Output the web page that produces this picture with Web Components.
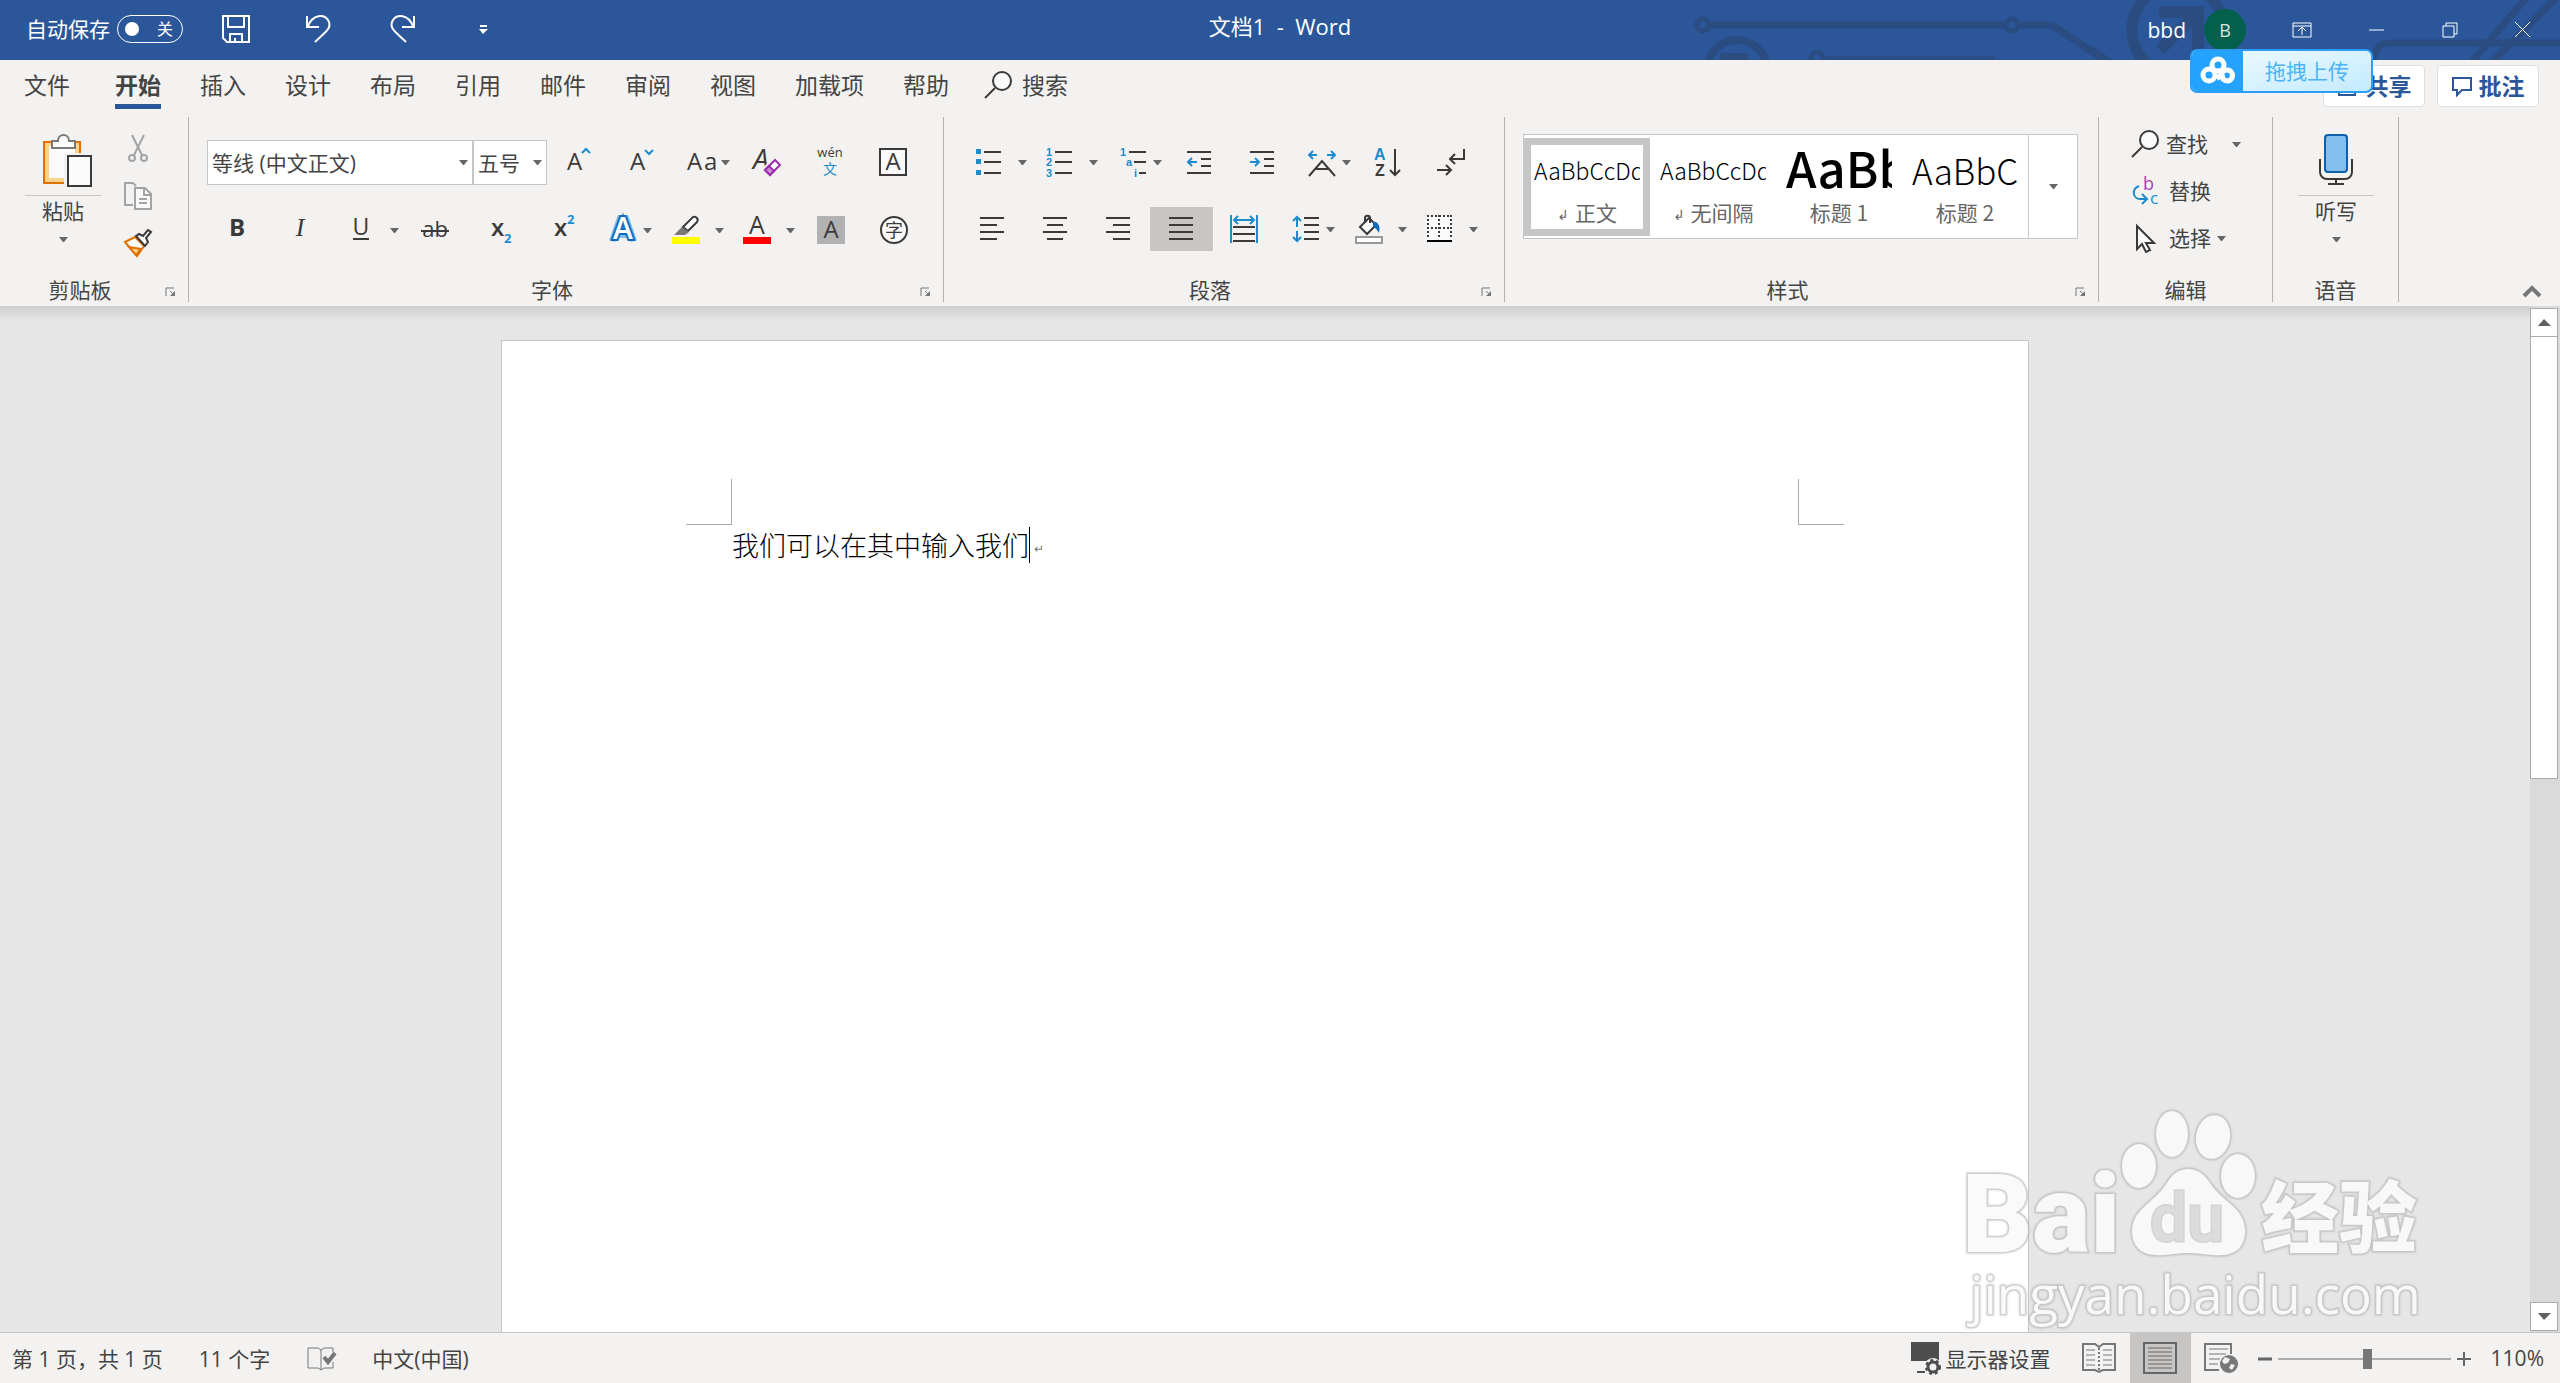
<!DOCTYPE html>
<html lang="zh-CN">
<head>
<meta charset="utf-8">
<title>文档1 - Word</title>
<style>
  html, body {
    height: 100%;
    margin: 0;
  }
  body {
    --brand: #2b579a;
    --surface: #f3f2f1;
    --line: #c6c6c6;
    --ink: #444;
    display: flex;
    flex-direction: column;
    overflow: hidden;
    background: var(--surface);
    color: var(--ink);
    font: 21px/24px "Open Sans", "Noto Sans CJK SC", sans-serif;
  }
  ribbon-bar ribbon-group:nth-of-type(1) { --group-width: 188px; --group-pad: 25px; }
  ribbon-bar ribbon-group:nth-of-type(2) { --group-width: 754px; --group-pad: 18px; }
  ribbon-bar ribbon-group:nth-of-type(3) { --group-width: 560px; --group-pad: 17px; }
  ribbon-bar ribbon-group:nth-of-type(4) { --group-width: 593px; --group-pad: 18px; }
  ribbon-bar ribbon-group:nth-of-type(5) { --group-width: 173px; --group-pad: 32px; }
  ribbon-bar ribbon-group:nth-of-type(6) { --group-width: 125px; --group-pad: 25px; }
</style>
</head>
<body>
<word-titlebar></word-titlebar>
<ribbon-tabs active="开始"></ribbon-tabs>

<ribbon-bar>
  <ribbon-group label="剪贴板" launcher>
    <ribbon-row gap="23">
      <ribbon-big icon="paste" label="粘贴"></ribbon-big>
      <ribbon-stack top="10">
        <ribbon-button icon="cut" title="剪切" slim></ribbon-button>
        <ribbon-button icon="copy" title="复制" slim></ribbon-button>
        <ribbon-button icon="brush" title="格式刷" slim></ribbon-button>
      </ribbon-stack>
    </ribbon-row>
  </ribbon-group>

  <ribbon-group label="字体" launcher>
    <ribbon-row>
      <ribbon-select name="字体" value="等线 (中文正文)" width="266"></ribbon-select>
      <ribbon-select name="字号" value="五号" width="74"></ribbon-select>
      <ribbon-button icon="grow" title="增大字号"></ribbon-button>
      <ribbon-button icon="shrink" title="减小字号"></ribbon-button>
      <ribbon-button icon="case" title="更改大小写" drop></ribbon-button>
      <ribbon-button icon="clear" title="清除格式"></ribbon-button>
      <ribbon-button icon="pinyin" title="拼音指南"></ribbon-button>
      <ribbon-button icon="charBorder" title="字符边框"></ribbon-button>
    </ribbon-row>
    <ribbon-row gap="2">
      <ribbon-row>
        <ribbon-button icon="bold" title="加粗"></ribbon-button>
        <ribbon-button icon="italic" title="倾斜"></ribbon-button>
        <ribbon-button icon="underline" title="下划线" drop split></ribbon-button>
        <ribbon-button icon="strike" title="删除线"></ribbon-button>
      </ribbon-row>
      <ribbon-row>
        <ribbon-button icon="sub" title="下标"></ribbon-button>
        <ribbon-button icon="sup" title="上标"></ribbon-button>
        <ribbon-button icon="effect" title="文本效果" drop></ribbon-button>
        <ribbon-button icon="highlight" title="突出显示" drop split></ribbon-button>
        <ribbon-button icon="color" title="字体颜色" drop split></ribbon-button>
        <ribbon-button icon="shade" title="字符底纹"></ribbon-button>
        <ribbon-button icon="enclose" title="带圈字符"></ribbon-button>
      </ribbon-row>
    </ribbon-row>
  </ribbon-group>

  <ribbon-group label="段落" launcher>
    <ribbon-row gap="2">
      <ribbon-row>
        <ribbon-button icon="bullets" title="项目符号" drop split></ribbon-button>
        <ribbon-button icon="numbers" title="编号" drop split></ribbon-button>
      </ribbon-row>
      <ribbon-row>
        <ribbon-button icon="levels" title="多级列表" drop></ribbon-button>
        <ribbon-button icon="outdent" title="减少缩进量"></ribbon-button>
        <ribbon-button icon="indent" title="增加缩进量"></ribbon-button>
        <ribbon-button icon="asian" title="中文版式" drop></ribbon-button>
        <ribbon-button icon="sort" title="排序"></ribbon-button>
        <ribbon-button icon="marks" title="显示编辑标记"></ribbon-button>
      </ribbon-row>
    </ribbon-row>
    <ribbon-row gap="2">
      <ribbon-row>
        <ribbon-button icon="left" title="左对齐"></ribbon-button>
        <ribbon-button icon="center" title="居中"></ribbon-button>
        <ribbon-button icon="right" title="右对齐"></ribbon-button>
        <ribbon-button icon="justify" title="两端对齐" active></ribbon-button>
        <ribbon-button icon="distribute" title="分散对齐"></ribbon-button>
      </ribbon-row>
      <ribbon-row>
        <ribbon-button icon="spacing" title="行距" drop></ribbon-button>
        <ribbon-button icon="fill" title="底纹" drop split></ribbon-button>
        <ribbon-button icon="borders" title="边框" drop split></ribbon-button>
      </ribbon-row>
    </ribbon-row>
  </ribbon-group>

  <ribbon-group label="样式" launcher>
    <style-gallery>
      <style-card name="正文" mark active>AaBbCcDd</style-card>
      <style-card name="无间隔" mark>AaBbCcDd</style-card>
      <style-card name="标题 1" level="1">AaBb</style-card>
      <style-card name="标题 2" level="2">AaBbC</style-card>
    </style-gallery>
  </ribbon-group>

  <ribbon-group label="编辑">
    <ribbon-stack top="5">
      <ribbon-button icon="find" label="查找" gap="7" far drop></ribbon-button>
      <ribbon-button icon="replace" label="替换" gap="10"></ribbon-button>
      <ribbon-button icon="select" label="选择" gap="10" drop></ribbon-button>
    </ribbon-stack>
  </ribbon-group>

  <ribbon-group label="语音">
    <ribbon-big icon="mic" label="听写"></ribbon-big>
  </ribbon-group>
</ribbon-bar>

<document-view>我们可以在其中输入我们</document-view>
<status-bar></status-bar>
<upload-badge>拖拽上传</upload-badge>

<script>
const dark = '#3b3a39'
const blue = '#1e8bcd'

const svg = (w, h, body) =>
  `<svg width="${w}" height="${h}" viewBox="0 0 ${w} ${h}" fill="none" stroke="${dark}" stroke-width="2" aria-hidden="true">${body}</svg>`

const letter = (x, y, size, text, extra = '') =>
  `<text x="${x}" y="${y}" font-size="${size}" fill="${dark}" stroke="none" ${extra}>${text}</text>`

// Marcas pequeñas de las listas, en azul
const marker = (x, y, text) =>
  letter(x, y, 11, text, `font-family="Liberation Sans" font-weight="700" style="fill:${blue}"`)

// Líneas horizontales: [x1, x2, y]
const lines = (...rows) =>
  rows.map(([a, b, y]) => `<path d="M${a} ${y}H${b}"/>`).join('')

const icons = {
  paste: svg(76, 54, `<path d="M22 10h30v36H22z" fill="#fafafa" stroke="#f7d48a" stroke-width="4"/>
    <path d="M19 8h36v41H19z" stroke="#e07000"/>
    <path d="M27 14V7h6c0-8 11-8 11 0h6v7z" fill="#fafafa" stroke="#7a7a7a"/>
    <path d="M39 19h28v35H39z" fill="#f3f2f1" stroke="none"/>
    <path d="M43 22h23v30H43z" fill="#fafafa"/>`),
  cut: svg(28, 28, `<g stroke="#a3a3a3"><path d="M8 0l10 20M20 0L10 20"/><circle cx="8" cy="23" r="3"/><circle cx="20" cy="23" r="3"/></g>`),
  copy: svg(28, 28, `<g stroke="#a3a3a3"><path d="M9 23H1V1h8l3 3"/><path d="M11 6h10l6 6v15H11z" fill="#fafafa"/><path d="M20 6v7h7M15 17h8M15 21h8"/></g>`),
  brush: svg(28, 28, `<path d="M1 13l10-5 9 9-7 10z" fill="#fff" stroke="#e07000"/><path d="M5 18l12 2-5 6z" fill="#f7d48a" stroke="#e07000"/>
    <path d="M12 7l3-2 4 2 5-6 3 2-5 6 2 4-3 4z" fill="#fff"/>`),
  grow: svg(28, 28, letter(3, 22, 24, 'A') + `<path d="M18 5l4-4 4 4" stroke="${blue}"/>`),
  shrink: svg(28, 28, letter(3, 22, 24, 'A') + `<path d="M18 2l4 4 4-4" stroke="${blue}"/>`),
  case: svg(28, 28, letter(0, 22, 24, 'A') + letter(17, 22, 24, 'a')),
  clear: svg(28, 28, letter(0, 21, 28, 'A', 'font-style="italic"') +
    `<path d="M10 21L21 10l7 7-10 11z" fill="#f3f2f1" stroke="#f3f2f1"/><path d="M12 22l10-10 5 5-10 10z" fill="#fff" stroke="#9b2fae"/><path d="M12 22l4-4 5 5-4 4z" fill="#d18ad9" stroke="#9b2fae"/>`),
  pinyin: svg(28, 28, letter(14, 9, 13, 'wén', 'text-anchor="middle"') +
    letter(14, 26, 14, '文', 'text-anchor="middle" style="fill:#1e8bcd"')),
  charBorder: svg(28, 28, `<path d="M1 1h26v26H1z" fill="#fafafa"/>` + letter(14, 22, 24, 'A', 'text-anchor="middle"')),
  bold: svg(28, 28, letter(13, 20, 24, 'B', 'text-anchor="middle" font-weight="700"')),
  italic: svg(28, 28, letter(13, 20, 26, 'I', 'text-anchor="middle" font-style="italic" font-family="Liberation Serif, serif"')),
  underline: svg(28, 28, letter(14, 19, 23, 'U', 'text-anchor="middle"') + `<path d="M6 23h16"/>`),
  strike: svg(28, 28, letter(14, 21, 22, 'ab', 'text-anchor="middle"') + `<path d="M0 15h28"/>`),
  sub: svg(28, 28, letter(5, 20, 24, 'x', 'font-weight="600"') + letter(18, 27, 13, '2', 'font-weight="700" style="fill:#1e8bcd"')),
  sup: svg(28, 28, letter(5, 20, 24, 'x', 'font-weight="600"') + letter(18, 8, 13, '2', 'font-weight="700" style="fill:#1e8bcd"')),
  effect: svg(28, 28, `<path d="M3 25L11 2h6l8 23M7 19h14" stroke="#83beec" stroke-width="6"/>
    <text x="14" y="23" font-size="30" font-weight="600" text-anchor="middle" fill="#fff" stroke="#0f6cbd" stroke-width="4" paint-order="stroke">A</text>`),
  highlight: svg(28, 28, `<path d="M11 11L21 1c3-1 6 2 4 5L16 15z" fill="#fff"/><path d="M10 11l7 5-4 3H2z" fill="#797775" stroke="none"/><path d="M0 21h28v7H0z" fill="#ff0" stroke="none"/>`),
  color: svg(28, 28, letter(14, 18, 25, 'A', 'text-anchor="middle"') + `<path d="M0 21h28v7H0z" fill="#f00" stroke="none"/>`),
  shade: svg(28, 28, `<path d="M0 0h28v28H0z" fill="#b1b1b1" stroke="none"/>` + letter(14, 22, 24, 'A', 'text-anchor="middle"')),
  enclose: svg(28, 28, `<circle cx="14" cy="14" r="13" fill="#fafafa"/>` + letter(14, 21, 18, '字', 'text-anchor="middle"')),
  bullets: svg(28, 28, `<g fill="${blue}" stroke="none"><path d="M1 1h5v5H1zM1 11h5v5H1zM1 22h5v5H1z"/></g>` + lines([9, 26, 4], [9, 26, 14], [9, 26, 25])),
  numbers: svg(28, 28, marker(0, 8, '1') + marker(0, 18, '2') + marker(0, 29, '3') + lines([9, 26, 4], [9, 26, 14], [9, 26, 25])),
  levels: svg(28, 28, marker(1, 8, '1') + marker(7, 18, 'a') + marker(15, 29, 'i') + lines([10, 27, 4], [15, 27, 14], [20, 27, 25])),
  outdent: svg(28, 28, lines([2, 26, 4], [16, 26, 11], [16, 26, 18], [2, 26, 25]) + `<path d="M12 14H3M7 10l-4 4 4 4" stroke="${blue}"/>`),
  indent: svg(28, 28, lines([2, 26, 4], [16, 26, 11], [16, 26, 18], [2, 26, 25]) + `<path d="M2 14h9M7 10l4 4-4 4" stroke="${blue}"/>`),
  asian: svg(28, 28, `<path d="M1 28l13-15 13 15M7 21h14"/><path d="M9 7H1M5 3L1 7l4 4M19 7h8M23 3l4 4-4 4" stroke="${blue}"/>`),
  sort: svg(28, 28, letter(0, 12, 16, 'A', 'font-family="Liberation Sans" font-weight="700" style="fill:#1e8bcd"') +
    letter(1, 28, 16, 'Z', 'font-family="Liberation Sans" font-weight="700"') + `<path d="M21 1v26M16 22l5 5 5-5"/>`),
  marks: svg(28, 28, `<path d="M27 1v10H14M18 6l-5 5 5 5M0 22h14M9 17l5 5-5 5"/>`),
  left: svg(28, 28, lines([2, 26, 3], [2, 19, 10], [2, 26, 17], [2, 19, 24])),
  center: svg(28, 28, lines([2, 26, 3], [6, 22, 10], [2, 26, 17], [6, 22, 24])),
  right: svg(28, 28, lines([2, 26, 3], [9, 26, 10], [2, 26, 17], [9, 26, 24])),
  justify: svg(28, 28, lines([2, 26, 3], [2, 26, 10], [2, 26, 17], [2, 26, 24])),
  distribute: svg(28, 28, lines([3, 25, 12], [3, 25, 19], [3, 25, 26]) + `<path d="M1 0v28M27 0v28M4 5h20M8 1L4 5l4 4M20 1l4 4-4 4" stroke="${blue}"/>`),
  spacing: svg(28, 28, lines([12, 27, 3], [12, 27, 10], [12, 27, 17], [12, 27, 24]) + `<path d="M5 2v10M1 6l4-4 4 4M5 16v10M1 22l4 4 4-4" stroke="${blue}"/>`),
  fill: svg(28, 28, `<path d="M5 12l9-9 7 7-9 9z" fill="#fff"/><path d="M10 8V3c0-3 5-3 5 0v5"/><path d="M18 7c4-1 8 3 6 11-2-3-3-5-6-6z" fill="#0f6cbd" stroke="none"/><path d="M1 22h26v6H1z" fill="#fff" stroke="#999"/>`),
  borders: svg(28, 28, `<path d="M1 1h25v24H1z" fill="#fafafa" stroke="none"/><path d="M1 1h25M1 13h25M2 0v24M13 0v24M25 0v24" stroke-dasharray="2 2"/><path d="M1 26h25" stroke="#000"/>`),
  find: svg(28, 28, `<circle cx="18" cy="10" r="9" fill="#fafafa"/><path d="M11 17L1 27"/>`),
  replace: svg(28, 28, letter(12, 13, 18, 'b', 'style="fill:#a83fbd"') + letter(19, 27, 17, 'c', 'style="fill:#1e8bcd"') +
    `<path d="M8 9c-8 3-6 13 1 13h6M11 17l5 5-5 5" stroke="${blue}"/>`),
  select: svg(28, 28, `<path d="M6 2l17 17h-8l4 7-4 2-4-8-5 5z" fill="#fafafa"/>`),
  mic: svg(76, 54, `<path d="M22 25v13c0 4 3 7 7 7h18c4 0 7-3 7-7V25M38 45v5M30 50h16"/><rect x="27" y="1" width="22" height="37" rx="3" fill="#83beec" stroke="#0f5fad"/>`),
  save: svg(28, 28, `<g stroke="#fff"><path d="M1 1h26v26H5l-4-4zM6 1v11h16V1M8 27v-8h12v8M13 27v-4"/></g>`),
  undo: svg(28, 28, `<path d="M2 1v11h12M3 11C8-1 19-1 23 5c5 8-3 12-13 22" stroke="#fff"/>`),
  redo: svg(28, 28, `<path d="M26 1v11H14M25 11C20-1 9-1 5 5c-5 8 3 12 13 22" stroke="#fff"/>`),
  more: svg(9, 9, `<path d="M1 1h7" stroke="#fff"/><path d="M0 4h9L4 9z" fill="#fff" stroke="none"/>`),
  ribbonMode: svg(20, 16, `<path d="M1 1h18v14H1zM1 4h18M10 13V6M6 9l4-4 4 4" stroke="#fff" stroke-width="1"/>`),
  minimize: svg(16, 16, `<path d="M0 8h15" stroke="#fff" stroke-width="1"/>`),
  restore: svg(16, 16, `<path d="M1 4h11v11H1zM4 4V1h11v11h-3" stroke="#fff" stroke-width="1"/>`),
  close: svg(16, 16, `<path d="M0 0l15 15M15 0L0 15" stroke="#fff" stroke-width="1"/>`),
  share: svg(22, 22, `<path d="M6 8H2v12h16v-6M8 14c0-6 4-8 10-8M14 1l5 5-5 5" stroke="#2b579a"/>`),
  comment: svg(20, 20, `<path d="M1 2h18v12h-9l-5 5v-5H1z" stroke="#2b579a"/>`),
  launcher: svg(10, 10, `<path d="M0 9V1h8M4 4l4 4" stroke="#777" stroke-width="1"/><path d="M9 4v5H4z" fill="#777" stroke="none"/>`),
  collapse: svg(18, 12, `<path d="M1 10l8-8 8 8" stroke="#777" stroke-width="4"/>`),
  proof: svg(30, 26, `<g stroke="#777"><path d="M15 4L12 2H2v20h10l3 2 3-2h9v-6M27 6V2h-9l-3 2v20" stroke-width="1"/><path d="M18 11l4 5 7-9" stroke-width="4"/></g>`),
  display: svg(30, 36, `<path d="M0 1h28v19H0zM6 30h8v2H6z" fill="#4d4d4d" stroke="none"/><circle cx="22" cy="26" r="9" fill="#f3f2f1" stroke="none"/><circle cx="22" cy="26" r="5" stroke="#4d4d4d" stroke-width="3"/><circle cx="22" cy="26" r="7" stroke="#4d4d4d" stroke-width="2" stroke-dasharray="3 3"/>`),
  read: svg(34, 30, `<g stroke="#777"><path d="M17 4l-4-3H1v26h12l4 2 4-2h12V1H21z"/><path d="M17 5v23" stroke-dasharray="2 2"/><path d="M4 7h9M4 12h9M4 17h9M4 22h9M21 7h9M21 12h9M21 17h9M21 22h9" stroke-width="1"/></g>`),
  print: svg(34, 32, `<g stroke="#666"><path d="M1 1h32v30H1z"/><path d="M5 6h24M5 10h24M5 14h24M5 18h24M5 22h24M5 26h24" stroke-width="1"/></g>`),
  web: svg(34, 32, `<g stroke="#777"><path d="M27 12V2H1v26h14"/><path d="M5 7h19M5 12h17M5 17h11M5 22h9" stroke-width="1"/></g><circle cx="25" cy="22" r="9" fill="#777" stroke="none"/><path d="M21 15l5 2-2 4-4 1-2-3zM27 22l4 1-3 5-3-2z" fill="#f3f2f1" stroke="none"/>`),
}

const caret = '<svg class="caret" width="9" height="5" viewBox="0 0 9 5" aria-hidden="true"><path d="M0 0h9L5 5H4z" fill="#666"/></svg>'

const base = `
  * { box-sizing: border-box; }
  svg { display: block; flex: none; overflow: visible; }
  button {
    margin: 0;
    padding: 0;
    border: 0;
    background: none;
    color: inherit;
    font: inherit;
    white-space: nowrap;
  }
`

class UiElement extends HTMLElement {
  constructor() {
    super()
    this.attachShadow({ mode: 'open' })
  }

  connectedCallback() {
    this.shadowRoot.innerHTML = `<style>${base}${this.styles()}</style>${this.markup()}`
  }

  attr(name, fallback = '') {
    return this.getAttribute(name) || fallback
  }
}

customElements.define('word-titlebar', class extends UiElement {
  styles() {
    return `
      :host {
        position: relative;
        display: grid;
        grid-template-columns: 1fr auto 1fr;
        align-items: center;
        height: 60px;
        flex: none;
        overflow: hidden;
        background: var(--brand);
        color: #fff;
      }
      .circuit { position: absolute; top: 0; right: 0; }
      .left, .right { position: relative; display: flex; align-items: center; height: 60px; }
      .left { padding-left: 26px; padding-bottom: 2px; }
      .right { justify-content: flex-end; padding-right: 29px; }
      label { display: flex; align-items: center; gap: 7px; margin-right: 39px; }
      .switch {
        display: flex;
        align-items: center;
        justify-content: space-between;
        width: 66px;
        height: 28px;
        padding: 0 9px 0 7px;
        border: 1px solid #fff;
        border-radius: 14px;
        font-size: 16px;
      }
      input {
        appearance: none;
        width: 14px;
        height: 14px;
        margin: 0;
        border-radius: 50%;
        background: #fff;
      }
      .quick { display: flex; align-items: center; gap: 55px; }
      .quick > :last-child { margin-left: 8px; }
      h1 { position: relative; margin: 0; padding-bottom: 8px; font: inherit; font-size: 22px; white-space: pre; }
      .avatar {
        width: 42px;
        height: 42px;
        margin: 0 46px 0 18px;
        border-radius: 50%;
        background: #03604c;
        color: #d5e5e0;
        font-size: 18px;
        line-height: 42px;
        text-align: center;
      }
      .window { display: flex; align-items: center; gap: 57px; }
    `
  }

  markup() {
    return `
      <svg class="circuit" width="900" height="60" viewBox="1660 0 900 60" fill="none" stroke="#2a4c80" stroke-width="7" aria-hidden="true">
        <circle cx="1703" cy="25" r="6" stroke-width="5"/><path d="M1711 25h293M2020 25h32l60 40"/>
        <circle cx="2012" cy="25" r="6" stroke-width="5"/>
        <circle cx="1737" cy="70" r="30" stroke-width="8"/><path d="M1720 57h28" stroke-width="8"/>
        <circle cx="1817" cy="58" r="6" stroke-width="5"/><path d="M1825 60h170"/>
        <path d="M2090 48l30 22"/>
        <circle cx="2178" cy="30" r="46" stroke-width="11"/>
        <path d="M2159 12h39v38M2196 14l-36 36" stroke-width="12"/>
        <path d="M2372 64c3-16 8-21 18-21h170M2470 64l56-66M2490 64l66-66"/>
      </svg>
      <div class="left">
        <label>自动保存<span class="switch"><input type="checkbox" aria-label="自动保存"><span>关</span></span></label>
        <div class="quick">
          <button title="保存">${icons.save}</button>
          <button title="撤消">${icons.undo}</button>
          <button title="恢复">${icons.redo}</button>
          <button title="自定义">${icons.more}</button>
        </div>
      </div>
      <h1>文档1  -  Word</h1>
      <div class="right">
        <span>bbd</span>
        <span class="avatar">B</span>
        <div class="window">
          <button title="功能区显示选项">${icons.ribbonMode}</button>
          <button title="最小化">${icons.minimize}</button>
          <button title="还原">${icons.restore}</button>
          <button title="关闭">${icons.close}</button>
        </div>
      </div>
    `
  }
})

customElements.define('ribbon-tabs', class extends UiElement {
  styles() {
    return `
      :host { display: flex; flex: none; height: 57px; font-size: 23px; }
      nav { display: flex; gap: 39px; padding-left: 24px; flex: 1; }
      a {
        display: flex;
        align-items: center;
        gap: 10px;
        height: 49px;
        padding-top: 6px;
        border-bottom: 5px solid transparent;
        color: inherit;
        text-decoration: none;
      }
      a:first-child { margin-right: 6px; }
      a:last-child { margin-left: -4px; }
      a.on { border-color: var(--brand); font-weight: 700; }
      .actions { display: flex; gap: 12px; padding: 5px 21px 0 0; }
      .actions button {
        display: flex;
        align-items: center;
        justify-content: center;
        gap: 7px;
        width: 102px;
        height: 42px;
        border: 1px solid #e1dfdd;
        border-radius: 4px;
        background: #fff;
        color: var(--brand);
        font-weight: 700;
      }
    `
  }

  markup() {
    const tabs = ['文件', '开始', '插入', '设计', '布局', '引用', '邮件', '审阅', '视图', '加载项', '帮助']
    return `
      <nav>
        ${tabs.map((tab) => `<a href="#"${tab === this.attr('active') ? ' class="on"' : ''}>${tab}</a>`).join('')}
        <a href="#">${icons.find}搜索</a>
      </nav>
      <div class="actions">
        <button>${icons.share}共享</button>
        <button>${icons.comment}批注</button>
      </div>
    `
  }
})

customElements.define('ribbon-bar', class extends UiElement {
  styles() {
    return `
      :host { display: flex; flex: none; height: 189px; }
      .fold { margin: auto 19px 8px auto; }
    `
  }

  markup() {
    return `<slot></slot><button class="fold" title="折叠功能区">${icons.collapse}</button>`
  }
})

customElements.define('ribbon-group', class extends UiElement {
  styles() {
    return `
      :host {
        display: flex;
        flex-direction: column;
        flex: none;
        width: var(--group-width);
        height: 185px;
        box-sizing: content-box;
        border-right: 1px solid #b3b0ad;
      }
      .body { display: flex; flex-direction: column; flex: 1; padding-left: var(--group-pad); }
      footer { display: flex; align-items: center; height: 24px; }
      footer span { flex: 1; text-align: center; }
      footer button { width: 28px; padding: 4px 0 0 6px; }
    `
  }

  markup() {
    const launcher = this.hasAttribute('launcher')
      ? `<button title="${this.attr('label')}设置">${icons.launcher}</button>`
      : ''
    return `<div class="body"><slot></slot></div><footer><span>${this.attr('label')}</span>${launcher}</footer>`
  }
})

customElements.define('ribbon-row', class extends UiElement {
  styles() {
    return `
      :host { display: flex; gap: ${this.attr('gap', '0')}px; padding-top: 23px; }
    `
  }

  connectedCallback() {
    super.connectedCallback()
    // Una fila anidada o con botones grandes no repite el margen superior
    if (this.parentElement.localName === 'ribbon-row' || this.querySelector('ribbon-big')) {
      this.style.paddingTop = '0'
    }
  }

  markup() {
    return '<slot></slot>'
  }
})

customElements.define('ribbon-stack', class extends UiElement {
  styles() {
    return `
      :host { display: flex; flex-direction: column; gap: 3px; padding-top: ${this.attr('top', '0')}px; }
    `
  }

  markup() {
    return '<slot></slot>'
  }
})

customElements.define('ribbon-button', class extends UiElement {
  styles() {
    return `
      :host { display: block; }
      button { display: flex; align-items: center; width: 63px; height: 44px; padding-left: 17px; }
      button.drop { padding-left: 14px; gap: 6px; }
      button.split { width: 71px; gap: 15px; }
      button.slim { width: 28px; padding: 0; }
      button.text { width: auto; padding: 0; gap: 6px; }
      button.text.far { gap: 24px; }
      button.active { background: #c8c6c4; }
      .label { display: flex; align-items: center; gap: ${this.attr('gap', '0')}px; }
    `
  }

  markup() {
    const flags = ['drop', 'split', 'slim', 'active', 'far'].filter((flag) => this.hasAttribute(flag))
    const label = this.attr('label')
    if (label) flags.push('text')
    return `
      <button class="${flags.join(' ')}" title="${this.attr('title', label)}">
        <span class="label">${icons[this.attr('icon')]}${label}</span>
        ${this.hasAttribute('drop') ? caret : ''}
      </button>
    `
  }
})

customElements.define('ribbon-big', class extends UiElement {
  styles() {
    return `
      :host { display: block; padding-top: 17px; }
      button { display: flex; flex-direction: column; align-items: center; width: 76px; }
      .label { width: 100%; margin-top: 7px; padding: 3px 0 14px; border-top: 1px solid #c8c6c4; }
    `
  }

  markup() {
    return `<button>${icons[this.attr('icon')]}<span class="label">${this.attr('label')}</span>${caret}</button>`
  }
})

customElements.define('ribbon-select', class extends UiElement {
  styles() {
    return `
      :host { display: block; }
      label { display: grid; align-items: center; width: ${this.attr('width')}px; }
      select {
        grid-area: 1 / 1;
        appearance: none;
        width: 100%;
        height: 45px;
        padding: 0 4px;
        border: 1px solid var(--line);
        border-radius: 0;
        background: #fff;
        color: inherit;
        font: inherit;
      }
      .caret { grid-area: 1 / 1; justify-self: end; margin-right: 5px; }
    `
  }

  markup() {
    return `
      <label>
        <select aria-label="${this.attr('name')}"><option>${this.attr('value')}</option></select>
        ${caret}
      </label>
    `
  }
})

customElements.define('style-gallery', class extends UiElement {
  styles() {
    return `
      :host {
        display: flex;
        box-sizing: border-box;
        width: 555px;
        height: 105px;
        margin-top: 17px;
        border: 1px solid var(--line);
        background: #fff;
      }
      .cards { display: flex; align-items: center; flex: 1; }
      .more { display: grid; place-items: center; width: 49px; border-left: 1px solid var(--line); }
    `
  }

  markup() {
    return `<div class="cards"><slot></slot></div><button class="more" title="其他">${caret}</button>`
  }
})

customElements.define('style-card', class extends UiElement {
  styles() {
    return `
      :host { display: block; font-family: "Noto Sans CJK SC", sans-serif; }
      button {
        display: flex;
        flex-direction: column;
        width: 126px;
        height: 98px;
        padding: 0 3px;
        border: 7px solid transparent;
      }
      button.active { border-color: var(--line); }
      .sample {
        width: 106px;
        height: 55px;
        overflow: hidden;
        color: #000;
        font-size: 23px;
        font-weight: 300;
        line-height: 50px;
        text-align: left;
      }
      .h1 { font-size: 49px; font-weight: 500; line-height: 44px; }
      .h2 { font-size: 35px; }
      .name { display: flex; justify-content: center; gap: 6px; width: 106px; color: #666; }
      .mark { font-size: 14px; line-height: 28px; }
    `
  }

  markup() {
    const mark = this.hasAttribute('mark') ? '<span class="mark">↲</span>' : ''
    return `
      <button class="${this.hasAttribute('active') ? 'active' : ''}">
        <span class="sample h${this.attr('level', '0')}"><slot></slot></span>
        <span class="name">${mark}${this.attr('name')}</span>
      </button>
    `
  }
})

customElements.define('document-view', class extends UiElement {
  styles() {
    return `
      :host {
        position: relative;
        display: flex;
        flex: 1;
        min-height: 0;
        overflow: hidden;
        background: linear-gradient(#cfcecd, #e6e6e6 14px);
      }
      main { display: flex; justify-content: center; flex: 1; padding-top: 34px; }
      .page {
        width: 60.4%;
        padding: 138px 184px 0;
        border: 1px solid var(--line);
        border-bottom: 0;
        background: #fff;
      }
      .corners { display: flex; justify-content: space-between; }
      .corners i { width: 46px; height: 46px; border: 0 solid #aaa; border-bottom-width: 1px; }
      .corners i:first-child { border-right-width: 1px; }
      .corners i:last-child { border-left-width: 1px; }
      p {
        display: flex;
        align-items: center;
        height: 36px;
        margin: 2px 0 0 46px;
        color: #000;
        font: 300 27px/34px "Noto Sans CJK SC", sans-serif;
      }
      .caret-bar { width: 1px; height: 36px; background: #000; }
      .mark { margin: 6px 0 0 4px; color: #777; font-size: 12px; }
      aside { display: flex; flex-direction: column; width: 30px; padding: 2px 2px 1px 0; background: #dadada; }
      aside button {
        display: grid;
        place-items: center;
        height: 29px;
        border: 1px solid #ababab;
        background: #fff;
      }
      .thumb { height: 442px; margin-bottom: auto; border: 1px solid #ababab; border-top: 0; background: #fff; }
      baidu-mark { position: absolute; right: 130px; bottom: 0; }
    `
  }

  markup() {
    return `
      <main>
        <section class="page">
          <div class="corners"><i></i><i></i></div>
          <p><slot></slot><span class="caret-bar"></span><span class="mark">↵</span></p>
        </section>
      </main>
      <aside>
        <button title="向上"><svg width="13" height="7"><path d="M0 7h13L6 0z" fill="#606060"/></svg></button>
        <div class="thumb"></div>
        <button title="向下"><svg width="13" height="7"><path d="M0 0h13L6 7z" fill="#606060"/></svg></button>
      </aside>
      <baidu-mark></baidu-mark>
    `
  }
})

customElements.define('baidu-mark', class extends UiElement {
  styles() {
    return `
      :host { display: block; }
      svg { filter: drop-shadow(0 0 1px #aaa); }
    `
  }

  markup() {
    return `
      <svg width="470" height="226" viewBox="1960 1106 470 226" fill="#fafafa" stroke="#c4c4c4" stroke-opacity="0.5" stroke-width="3" paint-order="stroke" opacity="0.9" aria-label="百度经验">
        <text x="1962" y="1252" font-family="Roboto" font-size="109" font-weight="900">Bai</text>
        <ellipse cx="2139" cy="1166" rx="17" ry="22"/>
        <ellipse cx="2172" cy="1134" rx="16" ry="23"/>
        <ellipse cx="2213" cy="1137" rx="17" ry="22" transform="rotate(10 2213 1137)"/>
        <ellipse cx="2238" cy="1176" rx="17" ry="22"/>
        <path d="M2188 1169c10 0 16 5 22 14 8 11 16 17 24 24 8 8 12 17 11 27-1 13-10 21-23 21-13 1-22-2-34-2s-20 3-34 2c-14-1-22-10-22-24 0-9 4-17 12-24 8-8 16-13 23-24 5-9 12-14 21-14z"/>
        <text x="2187" y="1241" font-family="Roboto" font-size="66" font-weight="500" text-anchor="middle" fill="#dcdcdc" stroke="#a8a8a8">du</text>
        <text x="2261" y="1247" font-family="Noto Sans CJK SC" font-size="78" font-weight="900">经验</text>
        <text x="1970" y="1314" font-family="Open Sans" font-size="53">jingyan.baidu.com</text>
      </svg>
    `
  }
})

customElements.define('status-bar', class extends UiElement {
  styles() {
    return `
      :host {
        display: flex;
        align-items: center;
        flex: none;
        height: 51px;
        box-sizing: border-box;
        padding: 0 16px 0 12px;
        border-top: 1px solid var(--line);
      }
      .info { display: flex; align-items: center; gap: 36px; flex: 1; padding-top: 2px; }
      .screen { display: flex; align-items: center; gap: 5px; margin-right: 18px; padding-top: 2px; }
      .view { display: grid; place-items: center; width: 61px; height: 50px; }
      .view.on { background: #c8c6c4; }
      .zoom { display: flex; align-items: center; gap: 6px; margin: 0 20px 0 6px; padding-top: 2px; }
      input {
        appearance: none;
        width: 173px;
        height: 20px;
        margin: 0;
        background: linear-gradient(#acacac, #acacac) center / 100% 2px no-repeat;
      }
      input::-webkit-slider-thumb { appearance: none; width: 9px; height: 20px; background: #777; }
    `
  }

  markup() {
    return `
      <div class="info">
        <span>第 1 页，共 1 页</span>
        <span>11 个字</span>
        <button title="校对">${icons.proof}</button>
        <span>中文(中国)</span>
      </div>
      <button class="screen">${icons.display}显示器设置</button>
      <button class="view" title="阅读视图">${icons.read}</button>
      <button class="view on" title="页面视图">${icons.print}</button>
      <button class="view" title="Web 版式视图">${icons.web}</button>
      <div class="zoom">
        <button title="缩小"><svg width="14" height="14"><path d="M0 7h14" stroke="#666" stroke-width="3"/></svg></button>
        <input type="range" min="0" max="100" value="52" aria-label="缩放">
        <button title="放大"><svg width="14" height="14"><path d="M0 7h14M7 0v14" stroke="#666" stroke-width="2"/></svg></button>
      </div>
      <span>110%</span>
    `
  }
})

customElements.define('upload-badge', class extends UiElement {
  styles() {
    return `
      :host {
        position: absolute;
        top: 49px;
        right: 187px;
        display: flex;
        box-sizing: border-box;
        width: 183px;
        height: 44px;
        overflow: hidden;
        border: 2px solid #2b9df4;
        border-radius: 7px;
        background: linear-gradient(165deg, #e4f6ff 30%, #c3ebff);
        color: #4db3f8;
      }
      .logo { display: grid; place-items: center; width: 51px; background: #23a2ff; }
      .text { flex: 1; line-height: 40px; text-align: center; }
    `
  }

  markup() {
    return `
      <span class="logo">
        <svg width="34" height="28" viewBox="0 0 34 28" fill="none" stroke="#fff" stroke-width="5" aria-hidden="true">
          <circle cx="17" cy="8" r="6"/><circle cx="8" cy="18" r="6"/><path d="M20 13l2 9c6 5 11-1 9-6-2-4-8-4-10 0l-5 6"/>
        </svg>
      </span>
      <span class="text"><slot></slot></span>
    `
  }
})
</script>
</body>
</html>
